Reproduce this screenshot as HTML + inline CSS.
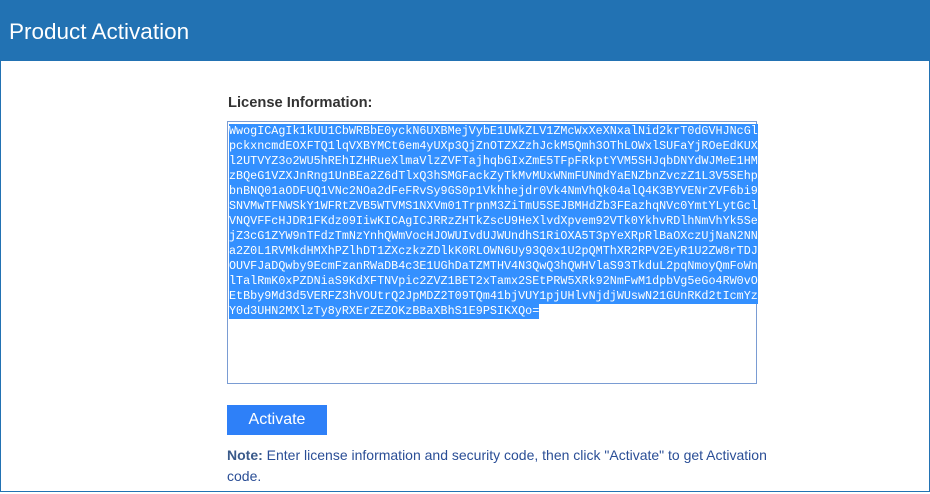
<!DOCTYPE html>
<html><head><meta charset="utf-8"><style>
body{margin:0;width:930px;height:494px;overflow:hidden;font-family:"Liberation Sans",sans-serif;background:#fff;position:relative}
.hd{position:absolute;left:0;top:0;width:930px;height:61px;background:#2272b3}
.hd span{position:absolute;left:9px;top:19px;color:#fff;font-size:22.5px}
.frame{position:absolute;left:0;top:61px;width:928px;height:430px;border:1px solid #2272b3;border-top:none}
.lbl{position:absolute;left:228px;top:95px;font-size:14.7px;font-weight:bold;color:#333}
.ta{position:absolute;left:227px;top:121px;width:528px;height:261px;border:1px solid #7a9cd3;background:#fff}
.ta pre{margin:0;position:absolute;left:1px;top:2px;font-family:"Liberation Mono",monospace;font-size:11.75px;line-height:15px;color:#fff}
.ta pre span{background:#3390ff;display:inline-block;height:15px;vertical-align:top}
.btn{position:absolute;left:227px;top:405px;width:100px;height:30px;background:#2e80f8;color:#fff;font-size:16px;text-align:center;line-height:30px}
.note{position:absolute;left:227px;top:445px;width:545px;font-size:14px;line-height:21px;color:#2a4e96}
.note b{color:#3a5a8a}
</style></head><body>
<div class="hd"><span>Product Activation</span></div>
<div class="frame"></div>
<div class="lbl">License Information:</div>
<div class="ta"><pre><span>WwogICAgIk1kUU1CbWRBbE0yckN6UXBMejVybE1UWkZLV1ZMcWxXeXNxalNid2krT0dGVHJNcGl</span>
<span>pckxncmdEOXFTQ1lqVXBYMCt6em4yUXp3QjZnOTZXZzhJckM5Qmh3OThLOWxlSUFaYjROeEdKUX</span>
<span>l2UTVYZ3o2WU5hREhIZHRueXlmaVlzZVFTajhqbGIxZmE5TFpFRkptYVM5SHJqbDNYdWJMeE1HM</span>
<span>zBQeG1VZXJnRng1UnBEa2Z6dTlxQ3hSMGFackZyTkMvMUxWNmFUNmdYaENZbnZvczZ1L3V5SEhp</span>
<span>bnBNQ01aODFUQ1VNc2NOa2dFeFRvSy9GS0p1Vkhhejdr0Vk4NmVhQk04alQ4K3BYVENrZVF6bi9</span>
<span>SNVMwTFNWSkY1WFRtZVB5WTVMS1NXVm01TrpnM3ZiTmU5SEJBMHdZb3FEazhqNVc0YmtYLytGcl</span>
<span>VNQVFFcHJDR1FKdz09IiwKICAgICJRRzZHTkZscU9HeXlvdXpvem92VTk0YkhvRDlhNmVhYk5Se</span>
<span>jZ3cG1ZYW9nTFdzTmNzYnhQWmVocHJOWUIvdUJWUndhS1RiOXA5T3pYeXRpRlBaOXczUjNaN2NN</span>
<span>a2Z0L1RVMkdHMXhPZlhDT1ZXczkzZDlkK0RLOWN6Uy93Q0x1U2pQMThXR2RPV2EyR1U2ZW8rTDJ</span>
<span>OUVFJaDQwby9EcmFzanRWaDB4c3E1UGhDaTZMTHV4N3QwQ3hQWHVlaS93TkduL2pqNmoyQmFoWn</span>
<span>lTalRmK0xPZDNiaS9KdXFTNVpic2ZVZ1BET2xTamx2SEtPRW5XRk92NmFwM1dpbVg5eGo4RW0vO</span>
<span>EtBby9Md3d5VERFZ3hVOUtrQ2JpMDZ2T09TQm41bjVUY1pjUHlvNjdjWUswN21GUnRKd2tIcmYz</span>
<span>Y0d3UHN2MXlzTy8yRXErZEZOKzBBaXBhS1E9PSIKXQo=</span></pre></div>
<div class="btn">Activate</div>
<div class="note"><b>Note:</b> Enter license information and security code, then click "Activate" to get Activation code.</div>
</body></html>
